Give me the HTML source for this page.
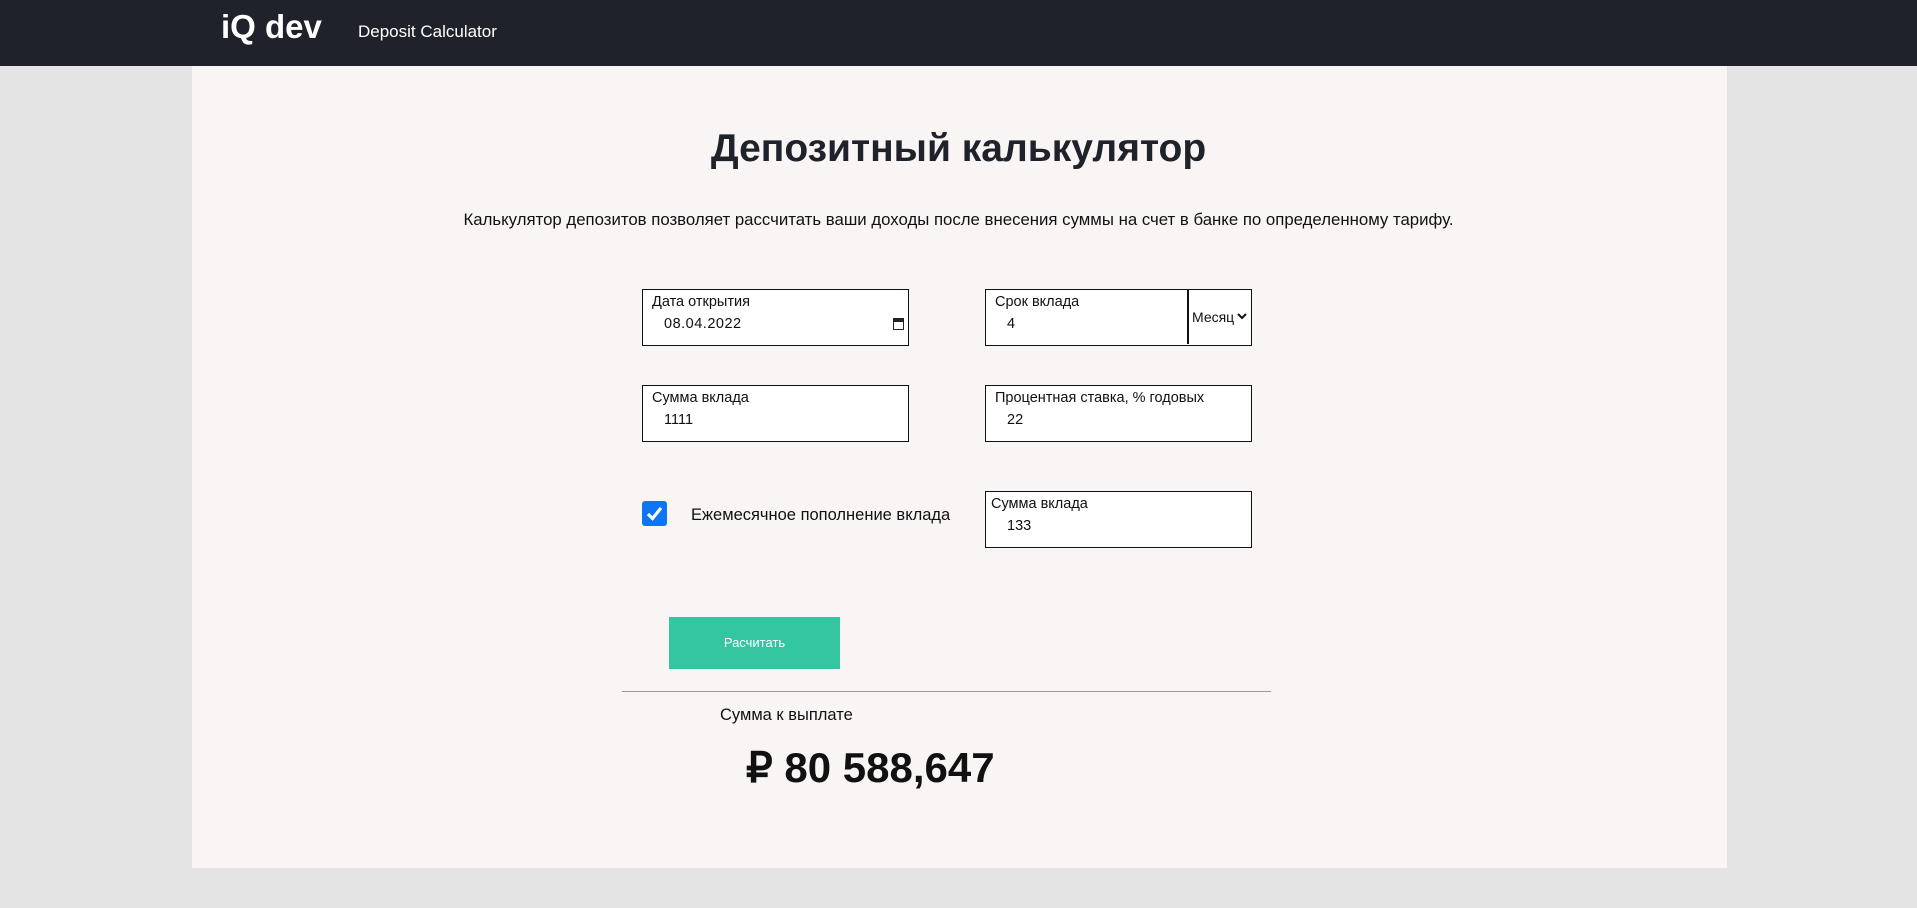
<!DOCTYPE html>
<html><head><meta charset="utf-8"><style>
*{margin:0;padding:0;box-sizing:border-box}
body{width:1917px;height:908px;background:#e4e4e4;font-family:"Liberation Sans",Arial,sans-serif;position:relative;overflow:hidden;color:#111}
.hdr{position:absolute;left:0;top:0;width:1917px;height:66px;background:#1f222a}
.logo{position:absolute;left:221px;top:8px;color:#fff;font-weight:bold;font-size:33px}
.nav{position:absolute;left:358px;top:22px;color:#fff;font-size:17px}
.panel{position:absolute;left:192px;top:66px;width:1535px;height:802px;background:#f9f5f4}
.a{position:absolute}
.title{left:0;width:1917px;text-align:center;top:127px;font-size:39px;font-weight:bold;color:#1f222a}
.sub{left:0;width:1917px;text-align:center;top:210px;font-size:16.8px}
.box{position:absolute;border:1.5px solid #111;background:#fff;width:267px;height:57px}
.lb{position:absolute;left:9px;top:4px;font-size:14.5px}
.vl{position:absolute;left:21px;top:26px;font-size:14.5px}
.btn{left:669px;top:617px;width:171px;height:52px;background:#33c6a0;color:#fff;font-size:13px;text-align:center;line-height:52px}
.hr{left:622px;top:691px;width:649px;height:1px;background:#999}
</style></head><body>
<div class="hdr"><div class="logo">iQ dev</div><div class="nav">Deposit Calculator</div></div>
<div class="panel"></div>
<div class="a title">Депозитный калькулятор</div>
<div class="a sub">Калькулятор депозитов позволяет рассчитать ваши доходы после внесения суммы на счет в банке по определенному тарифу.</div>

<div class="box" style="left:642px;top:289px"><div class="lb">Дата открытия</div><div class="vl" style="letter-spacing:0.5px">08.04.2022</div>
<div class="a" style="right:4px;top:28px;width:11px;height:12px;border:1.5px solid #222;border-top:4px solid #222"></div></div>

<div class="box" style="left:985px;top:289px"><div class="lb">Срок вклада</div><div class="vl">4</div>
<div class="a" style="left:201px;top:0;width:1.5px;height:54px;background:#111"></div>
<div class="a" style="left:206px;top:19px;font-size:14px">Месяц</div>
<svg class="a" style="left:251px;top:22px" width="10" height="8" viewBox="0 0 10 8"><path d="M1 2l4 4 4-4" stroke="#111" stroke-width="2" fill="none"/></svg></div>

<div class="box" style="left:642px;top:385px"><div class="lb">Сумма вклада</div><div class="vl">1111</div></div>
<div class="box" style="left:985px;top:385px"><div class="lb">Процентная ставка, % годовых</div><div class="vl">22</div></div>

<div class="a" style="left:642px;top:501px;width:25px;height:25px;background:#0d74f5;border-radius:3px">
<svg width="25" height="25" viewBox="0 0 25 25"><path d="M6 13l4.5 4.5L19 7" stroke="#fff" stroke-width="3.2" fill="none"/></svg></div>
<div class="a" style="left:691px;top:506px;font-size:16.5px">Ежемесячное пополнение вклада</div>

<div class="box" style="left:985px;top:491px"><div class="lb" style="left:5px">Сумма вклада</div><div class="vl">133</div></div>

<div class="a btn">Расчитать</div>
<div class="a hr"></div>
<div class="a" style="left:720px;top:706px;font-size:16.5px">Сумма к выплате</div>
<div class="a" style="left:746px;top:743px;font-size:42px;font-weight:bold">₽ 80 588,647</div>
</body></html>
